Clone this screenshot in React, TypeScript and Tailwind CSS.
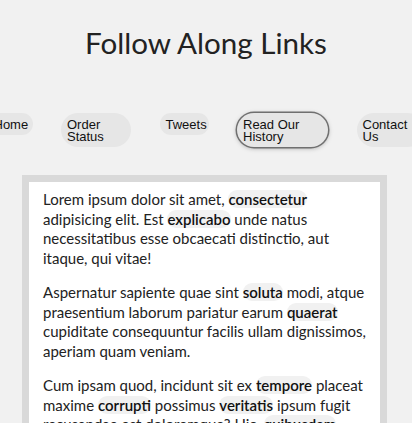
import React from 'react';

type NavItem = { label: string; width: string; active?: boolean };

const navItems: NavItem[] = [
  { label: 'Home', width: 'w-[45px]' },
  { label: 'Order Status', width: 'w-[70px]' },
  { label: 'Tweets', width: 'w-[49px]' },
  { label: 'Read Our History', width: 'w-[91px]', active: true },
  { label: 'Contact Us', width: 'w-[68px]' },
];

const L = ({ children }: { children: React.ReactNode }) => (
  <a href="#" className="rounded-full bg-[#f1f1f1] font-semibold text-[#111]">
    {children}
  </a>
);

const App = () => {
  return (
    <div className="h-screen overflow-hidden bg-[#f1f1f1] font-['Lato',sans-serif] text-[#222]">
      <h1 className="pt-[28px] text-center text-[29.6px] font-normal leading-[29px] text-[#222]">
        Follow Along Links
      </h1>

      <nav className="mt-[56px] flex justify-center gap-[28.5px] font-['Liberation_Sans',Arial,sans-serif]">
        {navItems.map((item) => (
          <a
            key={item.label}
            href="#"
            className={`${item.width} shrink-0 self-start rounded-[20px] bg-[#e6e6e6] px-[6px] pt-[6px] pb-[4px] text-[13px] leading-[12px] text-[#111] ${
              item.active ? 'shadow-[0_0_0_1.5px_#707070,0_1px_5px_rgba(0,0,0,0.35)]' : ''
            }`}
          >
            {item.label}
          </a>
        ))}
      </nav>

      <div className="ml-[22px] mt-[28px] w-[365px] border-[7px] border-[#d9d9d9] bg-white px-[14px] pt-[8px] text-[15px] leading-[19.5px]">
        <p className="mb-[15px]">
          Lorem ipsum dolor sit amet, <L>consectetur</L> adipisicing elit. Est <L>explicabo</L> unde natus
          necessitatibus esse obcaecati distinctio, aut itaque, qui vitae!
        </p>
        <p className="mb-[15px]">
          Aspernatur sapiente quae sint <L>soluta</L> modi, atque praesentium laborum pariatur earum{' '}
          <L>quaerat</L> cupiditate consequuntur facilis ullam dignissimos, aperiam quam veniam.
        </p>
        <p className="mb-[15px]">
          Cum ipsam quod, incidunt sit ex <L>tempore</L> placeat maxime <L>corrupti</L> possimus{' '}
          <L>veritatis</L> ipsum fugit recusandae est doloremque? Hic, <L>quibusdam</L>, nulla.
        </p>
        <p className="mb-[15px]">
          Esse quibusdam, ad, ducimus cupiditate <L>nulla</L>, quae magni odit <L>totam</L> ut consequatur
          eveniet sunt quam provident sapiente dicta neque quod.
        </p>
        <p className="pb-[15px]">
          Aliquam <L>dicta</L> sequi culpa fugiat <L>consequuntur</L> pariatur optio ad minima, maxime{' '}
          <L>odio</L>, distinctio magni impedit tempore enim repellendus <L>repudiandae</L> quas!
        </p>
      </div>
    </div>
  );
};

export default App;
